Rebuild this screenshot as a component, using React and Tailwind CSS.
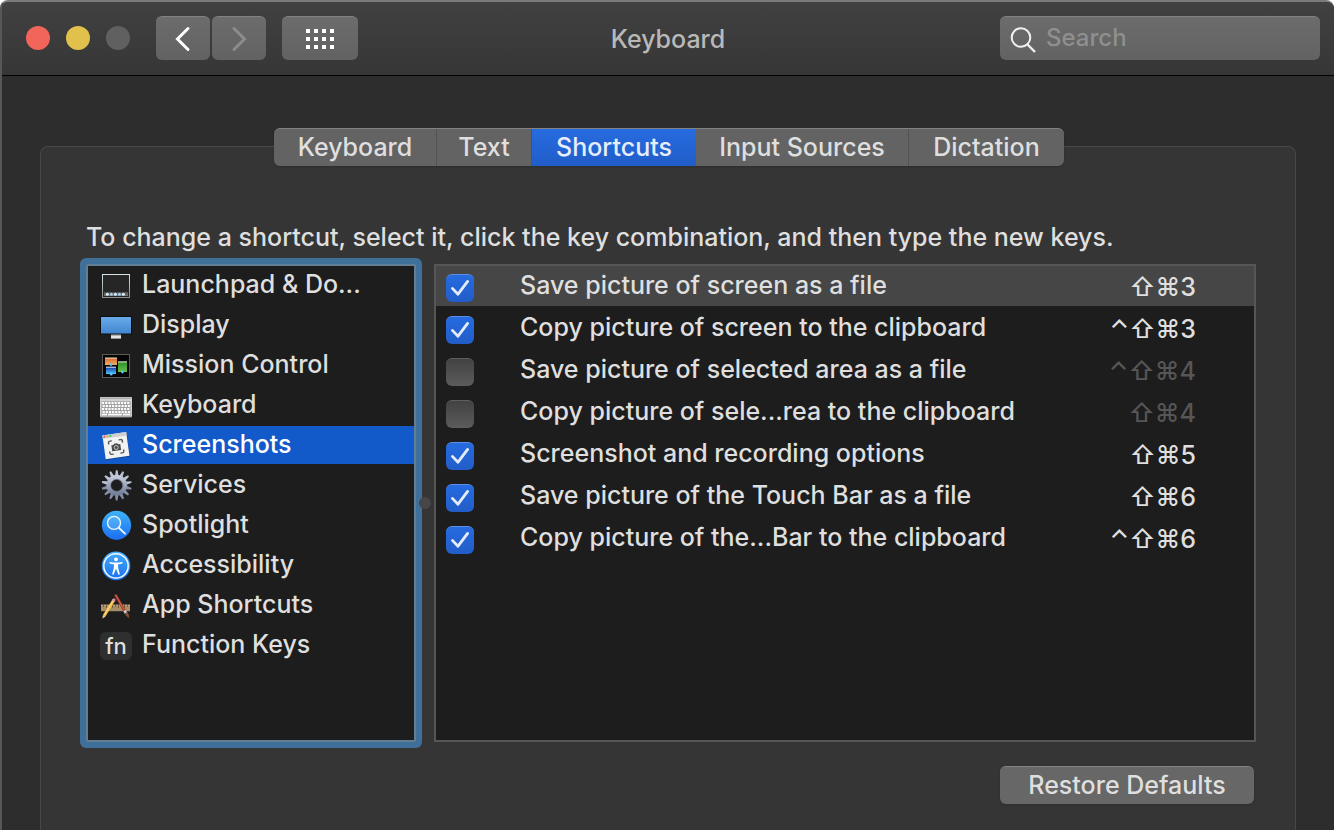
import React, { useState } from "react";

function LaunchpadIcon() {
  return (
    <svg width="32" height="38" viewBox="0 0 32 38" aria-hidden="true">
      <defs>
        <linearGradient id="lp" x1="0" y1="0" x2="0" y2="1">
          <stop offset="0" stopColor="#d3e2e4" />
          <stop offset="1" stopColor="#8b9090" />
        </linearGradient>
        <linearGradient id="lpDock" x1="0" y1="0" x2="0" y2="1">
          <stop offset="0" stopColor="#4b4f50" />
          <stop offset="1" stopColor="#757a7b" />
        </linearGradient>
      </defs>
      <rect x="2.5" y="8.5" width="27" height="23" fill="#262626" stroke="url(#lp)" />
      <rect x="4" y="26" width="24" height="4" fill="url(#lpDock)" />
      {[6, 10, 14, 18, 22].map((x, i) => (
        <circle key={x} cx={x + 1.4} cy="28.2" r="1.5" fill={i % 2 ? "#9fd0ef" : "#e3edf3"} />
      ))}
    </svg>
  );
}

function DisplayIcon() {
  return (
    <svg width="32" height="38" viewBox="0 0 32 38" aria-hidden="true">
      <defs>
        <linearGradient id="dp" x1="0" y1="0" x2="0" y2="1">
          <stop offset="0" stopColor="#69aae9" />
          <stop offset="1" stopColor="#4186d0" />
        </linearGradient>
      </defs>
      <rect x="0" y="10" width="32" height="18.5" rx="1" fill="#0d0d0f" />
      <rect x="1" y="11" width="30" height="16.5" fill="url(#dp)" />
      <path d="M11 28.5h10v2h-10z" fill="#b0b0b0" />
      <rect x="11" y="30" width="10" height="2.6" fill="#e4e4e4" />
    </svg>
  );
}

function MissionIcon() {
  return (
    <svg width="32" height="38" viewBox="0 0 32 38" aria-hidden="true">
      <defs>
        <linearGradient id="mcO" x1="0" y1="0" x2="0" y2="1">
          <stop offset="0" stopColor="#d9692a" />
          <stop offset="1" stopColor="#f3ac61" />
        </linearGradient>
        <linearGradient id="mcB" x1="0" y1="0" x2="0" y2="1">
          <stop offset="0" stopColor="#1637a8" />
          <stop offset="1" stopColor="#4fc6f5" />
        </linearGradient>
        <linearGradient id="mcG" x1="0" y1="0" x2="0" y2="1">
          <stop offset="0" stopColor="#2f8f2b" />
          <stop offset="1" stopColor="#62c148" />
        </linearGradient>
      </defs>
      <rect x="2.5" y="8.5" width="27" height="23" fill="#050505" stroke="#5b5b5b" />
      <rect x="5" y="12" width="12" height="7" fill="url(#mcO)" />
      <rect x="5" y="11.5" width="12" height="1.2" fill="#e8cdb5" />
      <rect x="6" y="21" width="10" height="7" fill="url(#mcB)" />
      <rect x="6" y="20.6" width="10" height="1.2" fill="#c4d0e8" />
      <rect x="18" y="16" width="9" height="10" fill="url(#mcG)" />
      <rect x="18" y="15.3" width="9" height="1.2" fill="#c6dfc1" />
      <circle cx="11" cy="18.6" r="1.4" fill="#5cc3f5" />
      <circle cx="11.2" cy="28" r="1.5" fill="#5cc3f5" />
      <circle cx="22.4" cy="26" r="1.4" fill="#5cc3f5" />
    </svg>
  );
}

function KeyboardIcon() {
  const rows = [16, 19, 22, 25];
  return (
    <svg width="32" height="38" viewBox="0 0 32 38" aria-hidden="true">
      <rect x="0" y="11" width="32" height="20.5" rx="1" fill="#8f8f8f" />
      <rect x="0" y="11" width="32" height="19.5" rx="1" fill="#d2d2d2" />
      <rect x="0.6" y="11.6" width="30.8" height="1.2" fill="#a9a9a9" />
      <rect x="1.5" y="15.4" width="29" height="14.4" fill="#9b9b9b" />
      {rows.map((y, r) =>
        Array.from({ length: 9 }, (_, c) => (
          <rect key={y + "-" + c} x={2 + c * 3.15 + (r % 2 ? 0.6 : 0)} y={y} width="2.2" height="2.1" fill="#fdfdfd" />
        ))
      )}
      <rect x="2" y="27.7" width="5" height="1.7" fill="#fdfdfd" />
      <rect x="8" y="27.7" width="14" height="1.7" fill="#fdfdfd" />
      <rect x="23" y="27.7" width="7" height="1.7" fill="#fdfdfd" />
    </svg>
  );
}

function ScreenshotsIcon() {
  return (
    <svg width="32" height="38" viewBox="0 0 32 38" aria-hidden="true">
      <g transform="rotate(-8 16 20)">
        <rect x="4.2" y="8.4" width="24" height="24" fill="#00000055" />
        <rect x="4" y="7.6" width="24" height="24" fill="#f2f2f2" />
        <rect x="4" y="7.6" width="24" height="3.4" fill="#cfcfcf" />
        <circle cx="5.8" cy="9.2" r="1.1" fill="#ef5b52" />
        <circle cx="8.8" cy="9.2" r="1.1" fill="#efa04a" />
        <circle cx="11.8" cy="9.2" r="1.1" fill="#3cc35a" />
        <path
          d="M9 17.5v-1.6q0-1.6 1.6-1.6h2M19.4 14.3h2q1.6 0 1.6 1.6v1.6M23 24.5v1.6q0 1.6-1.6 1.6h-2M12.6 27.7h-2q-1.6 0-1.6-1.6v-1.6"
          fill="none"
          stroke="#555"
          strokeWidth="1.4"
        />
        <path d="M11.5 18.7h2l.9-1.3h3.2l.9 1.3h2v6h-9z" fill="#4b4b4b" />
        <circle cx="16" cy="21.5" r="2" fill="#4b4b4b" stroke="#d9d9d9" strokeWidth=".8" />
      </g>
    </svg>
  );
}

function ServicesIcon() {
  return (
    <svg width="32" height="38" viewBox="0 0 32 38" aria-hidden="true">
      <defs>
        <linearGradient id="sv" x1="0" y1="0" x2="0" y2="1">
          <stop offset="0" stopColor="#c3cad9" />
          <stop offset="1" stopColor="#75809a" />
        </linearGradient>
      </defs>
      {Array.from({ length: 14 }, (_, i) => (
        <path
          key={i}
          d="M15 9.500 15.900 4.200h1.700l.9 5.300z"
          fill={i > 3 && i < 11 ? "#8590a8" : "#bac2d2"}
          transform={`rotate(${(i * 360) / 14} 16.7 19.3)`}
        />
      ))}
      <circle cx="16.7" cy="19.3" r="8.2" fill="none" stroke="url(#sv)" strokeWidth="4.6" />
      <circle cx="16.7" cy="19.3" r="6" fill="none" stroke="#5d667c" strokeWidth=".7" />
    </svg>
  );
}

function SpotlightIcon() {
  return (
    <svg width="32" height="38" viewBox="0 0 32 38" aria-hidden="true">
      <defs>
        <linearGradient id="sp" x1="0" y1="0" x2="0" y2="1">
          <stop offset="0" stopColor="#3db4f8" />
          <stop offset="1" stopColor="#1c6cf0" />
        </linearGradient>
      </defs>
      <circle cx="16.5" cy="19.3" r="14.6" fill="url(#sp)" />
      <circle cx="14" cy="16.9" r="6.5" fill="#ffffff22" stroke="#e9f5ff" strokeWidth="1.4" />
      <path d="M18.8 21.7 25 27.6" stroke="#e9f5ff" strokeWidth="1.9" strokeLinecap="round" />
    </svg>
  );
}

function AccessibilityIcon() {
  return (
    <svg width="32" height="38" viewBox="0 0 32 38" aria-hidden="true">
      <defs>
        <linearGradient id="ac" x1="0" y1="0" x2="0" y2="1">
          <stop offset="0" stopColor="#45adf8" />
          <stop offset="1" stopColor="#1a6ff0" />
        </linearGradient>
      </defs>
      <circle cx="16" cy="19.9" r="14.3" fill="url(#ac)" />
      <circle cx="16" cy="19.9" r="12.2" fill="none" stroke="#f2f9ff" strokeWidth="1.5" />
      <circle cx="16" cy="13.3" r="1.9" fill="#fff" />
      <path
        d="M9.6 16.1q6.4 1 12.8 0v1.3l-4.5 1 .4 4 1.6 5.9-1.5.5-2.4-6.3-2.4 6.3-1.5-.5 1.6-5.9.4-4-4.5-1z"
        fill="#fff"
      />
    </svg>
  );
}

function AppShortcutsIcon() {
  return (
    <svg width="32" height="38" viewBox="0 0 32 38" aria-hidden="true">
      <rect x="1" y="19" width="29" height="6.2" fill="#a98f68" />
      <rect x="1" y="18.6" width="29" height="1" fill="#c9b28a" />
      {Array.from({ length: 9 }, (_, i) => (
        <rect key={i} x={3 + i * 3} y="19" width=".8" height={i % 2 ? 2.8 : 1.8} fill="#5b4a30" />
      ))}
      <path d="M14.3 9.2 16.6 8.3 25.8 24 23.4 25.4z" fill="#a8382a" />
      <path d="M15.3 8.7 24.6 24.7" stroke="#e0785c" strokeWidth=".8" />
      <path d="M23.3 25.2 25.8 23.9 27.3 26.4 24.8 27.9z" fill="#c9cbd0" />
      <path d="M24.6 27.5 27.3 26q2.2 2.8 1.9 6.2-3.3-1.4-4.6-4.7z" fill="#7d5236" />
      <path d="M2.9 29 12.7 13 15.3 14.6 5.5 30.5z" fill="#f1bd45" />
      <path d="M4 29.6 13.8 13.7" stroke="#ffe08a" strokeWidth=".9" />
      <path d="M11.9 14.3 12.9 12.7q1-.9 2 .1t.6 1.4l-1.1 1.7z" fill="#d98bb4" />
      <path d="M2.9 29 5.5 30.5 2.3 32.8z" fill="#ecd3a4" />
      <path d="M2.6 31.4 3.5 32 2.3 32.8z" fill="#222" />
    </svg>
  );
}

function FnIcon() {
  return (
    <span
      aria-hidden="true"
      className="mt-1.5 flex h-7 w-8 items-center justify-center rounded-md bg-[#2f2f2f] text-[22px] leading-7"
    >
      fn
    </span>
  );
}

const categories = [
  ["Launchpad & Do...", LaunchpadIcon],
  ["Display", DisplayIcon],
  ["Mission Control", MissionIcon],
  ["Keyboard", KeyboardIcon],
  ["Screenshots", ScreenshotsIcon],
  ["Services", ServicesIcon],
  ["Spotlight", SpotlightIcon],
  ["Accessibility", AccessibilityIcon],
  ["App Shortcuts", AppShortcutsIcon],
  ["Function Keys", FnIcon],
];

const initialShortcuts = [
  { name: "Save picture of screen as a file", keys: "⇧⌘3", on: true },
  { name: "Copy picture of screen to the clipboard", keys: "⌃⇧⌘3", on: true },
  { name: "Save picture of selected area as a file", keys: "⌃⇧⌘4", on: false },
  { name: "Copy picture of sele...rea to the clipboard", keys: "⇧⌘4", on: false },
  { name: "Screenshot and recording options", keys: "⇧⌘5", on: true },
  { name: "Save picture of the Touch Bar as a file", keys: "⇧⌘6", on: true },
  { name: "Copy picture of the...Bar to the clipboard", keys: "⌃⇧⌘6", on: true },
];

const tabs = [
  ["Keyboard", "w-[163px]"],
  ["Text", "w-[95px]"],
  ["Shortcuts", "w-[164px]"],
  ["Input Sources", "w-[213px]"],
  ["Dictation", "w-[155px]"],
];

function Titlebar() {
  const button =
    "flex h-11 items-center justify-center rounded-md border-t border-[#828282] bg-linear-to-b from-[#6c6c6c] to-[#626262]";
  return (
    <header className="grid h-[74px] grid-cols-[1fr_auto_1fr] items-start border-b border-black bg-linear-to-b from-[#414141] to-[#363636] pt-3.5">
      <div className="flex items-center pl-6">
        <div className="flex gap-4">
          <button aria-label="Close" className="size-6 rounded-full bg-[#f1655a]" />
          <button aria-label="Minimize" className="size-6 rounded-full bg-[#e2c04c]" />
          <button aria-label="Zoom" disabled className="size-6 rounded-full bg-[#606060]" />
        </div>
        <div className="ml-[26px] flex gap-0.5">
          <button aria-label="Back" className={button + " w-[54px]"}>
            <svg width="18" height="28" viewBox="0 0 18 28" fill="none" stroke="#fff" strokeWidth="3" strokeLinecap="round">
              <path d="M14 3.5 3.5 14 14 24.5" />
            </svg>
          </button>
          <button aria-label="Forward" disabled className={button + " w-[54px]"}>
            <svg width="18" height="28" viewBox="0 0 18 28" fill="none" stroke="#8c8c8c" strokeWidth="3" strokeLinecap="round">
              <path d="M4 3.5 14.5 14 4 24.5" />
            </svg>
          </button>
        </div>
        <button aria-label="Show all" className={button + " ml-4 w-[76px]"}>
          <svg width="28" height="20" viewBox="0 0 28 20" fill="#fff">
            {[0, 8, 16].map((y) => [0, 8, 16, 24].map((x) => <rect key={x + "-" + y} x={x} y={y} width="4" height="4" />))}
          </svg>
        </button>
      </div>
      <h1 className="text-[25px] leading-[46px] text-[#b9b9b9]">Keyboard</h1>
      <label className="mr-3.5 flex h-11 w-80 items-center gap-2 justify-self-end rounded-md border-t border-[#828282] bg-linear-to-b from-[#6c6c6c] to-[#626262] px-2.5">
        <svg width="28" height="28" viewBox="0 0 28 28" fill="none" stroke="#f0f0f0" strokeWidth="2" aria-hidden="true">
          <circle cx="11" cy="12.5" r="9.3" />
          <path d="M17.5 19.5 25 27" strokeWidth="2.4" />
        </svg>
        <input
          type="text"
          aria-label="Search"
          placeholder="Search"
          className="min-w-0 flex-1 bg-transparent pb-0.5 text-[24px] leading-8 text-white outline-none placeholder:text-[#8f8f8f]"
        />
      </label>
    </header>
  );
}

export default function App() {
  const [tab, setTab] = useState("Shortcuts");
  const [category, setCategory] = useState("Screenshots");
  const [items, setItems] = useState(initialShortcuts);
  const toggle = (i) => setItems(items.map((s, n) => (n === i ? { ...s, on: !s.on } : s)));

  return (
    <div className="bg-white font-['Inter','Liberation_Sans',sans-serif] text-[25px] leading-8 font-medium text-[#dfdfdf]">
      <div className="flex min-h-screen flex-col overflow-hidden rounded-t-lg border-t-2 border-l-2 border-t-[#7b7b7b] border-l-[#575757] bg-[#2d2d2d]">
        <Titlebar />
        <main className="flex flex-1 flex-col px-[38px] pt-[52px]">
          <nav className="relative z-10 ml-0.5 flex h-[38px] self-center overflow-hidden rounded-md border-t border-[#828282] bg-[#636363] shadow-sm">
            {tabs.map(([name, width]) => (
              <button
                key={name}
                onClick={() => setTab(name)}
                className={
                  width +
                  " pb-0.5 " +
                  (tab === name
                    ? "bg-linear-to-b from-[#266be0] to-[#215dc8] text-[#e6edfb]"
                    : "border-r border-[#525252] last:border-r-0")
                }
              >
                {name}
              </button>
            ))}
          </nav>
          <section className="-mt-5 flex flex-1 flex-col rounded-t-lg border border-b-0 border-[#484848] bg-[#353535] pt-[74px] pr-[39px] pb-[26px] pl-[45px]">
            <p>To change a shortcut, select it, click the key combination, and then type the new keys.</p>
            <div className="mt-[11px] flex h-[478px]">
              <ul className="flex w-[330px] flex-col gap-0.5 rounded-xs border-2 border-[#617e94] bg-[#1d1d1d] ring-6 ring-[#3f7099]">
                {categories.map(([name, Icon]) => (
                  <li key={name}>
                    <button
                      onClick={() => setCategory(name)}
                      className={
                        "flex h-[38px] w-full items-start gap-2.5 pl-3 text-left " +
                        (category === name ? "bg-[#1259ca] text-white" : "")
                      }
                    >
                      <Icon />
                      <span className="pt-0.5">{name}</span>
                    </button>
                  </li>
                ))}
              </ul>
              <div className="flex w-[18px] items-center justify-center">
                <span className="size-3 rounded-full bg-[#464646]" />
              </div>
              <div className="min-w-0 flex-1 overflow-hidden border-2 border-[#565656] bg-[#1d1d1d]">
                <table className="-mt-0.5 w-full border-collapse">
                  <tbody>
                    {items.map((s, i) => (
                      <tr key={s.name} className={"h-[42px] " + (i === 0 ? "bg-[#464646]" : "")}>
                        <td className="w-[84px] p-0 pt-1.5 pl-2.5">
                          <span className="grid size-7">
                            <input
                              id={"shortcut-" + i}
                              type="checkbox"
                              checked={s.on}
                              onChange={() => toggle(i)}
                              className="col-start-1 row-start-1 size-7 appearance-none rounded-md border-t border-[#5e5e5e] bg-linear-to-b from-[#424242] to-[#5c5c5c] checked:border-[#5c90e8] checked:from-[#266be0] checked:to-[#215dc8]"
                            />
                            {s.on && (
                              <svg className="pointer-events-none col-start-1 row-start-1" width="28" height="28" viewBox="0 0 28 28" fill="none" stroke="#e4ecfa" strokeWidth="2.8" strokeLinecap="round" strokeLinejoin="round" aria-hidden="true">
                                <path d="M6.4 14.4 12 20.2 21.6 7.4" />
                              </svg>
                            )}
                          </span>
                        </td>
                        <td className="p-0">
                          <label htmlFor={"shortcut-" + i}>{s.name}</label>
                        </td>
                        <td className={"p-0 pt-1 pr-[58px] text-right " + (s.on ? "" : "text-[#565656]")}>{s.keys}</td>
                      </tr>
                    ))}
                  </tbody>
                </table>
              </div>
            </div>
            <button className="mt-6 mr-0.5 h-[38px] w-[254px] self-end rounded-md border-t border-[#858585] bg-[#676767] pb-0.5 shadow-sm">
              Restore Defaults
            </button>
          </section>
        </main>
      </div>
    </div>
  );
}
